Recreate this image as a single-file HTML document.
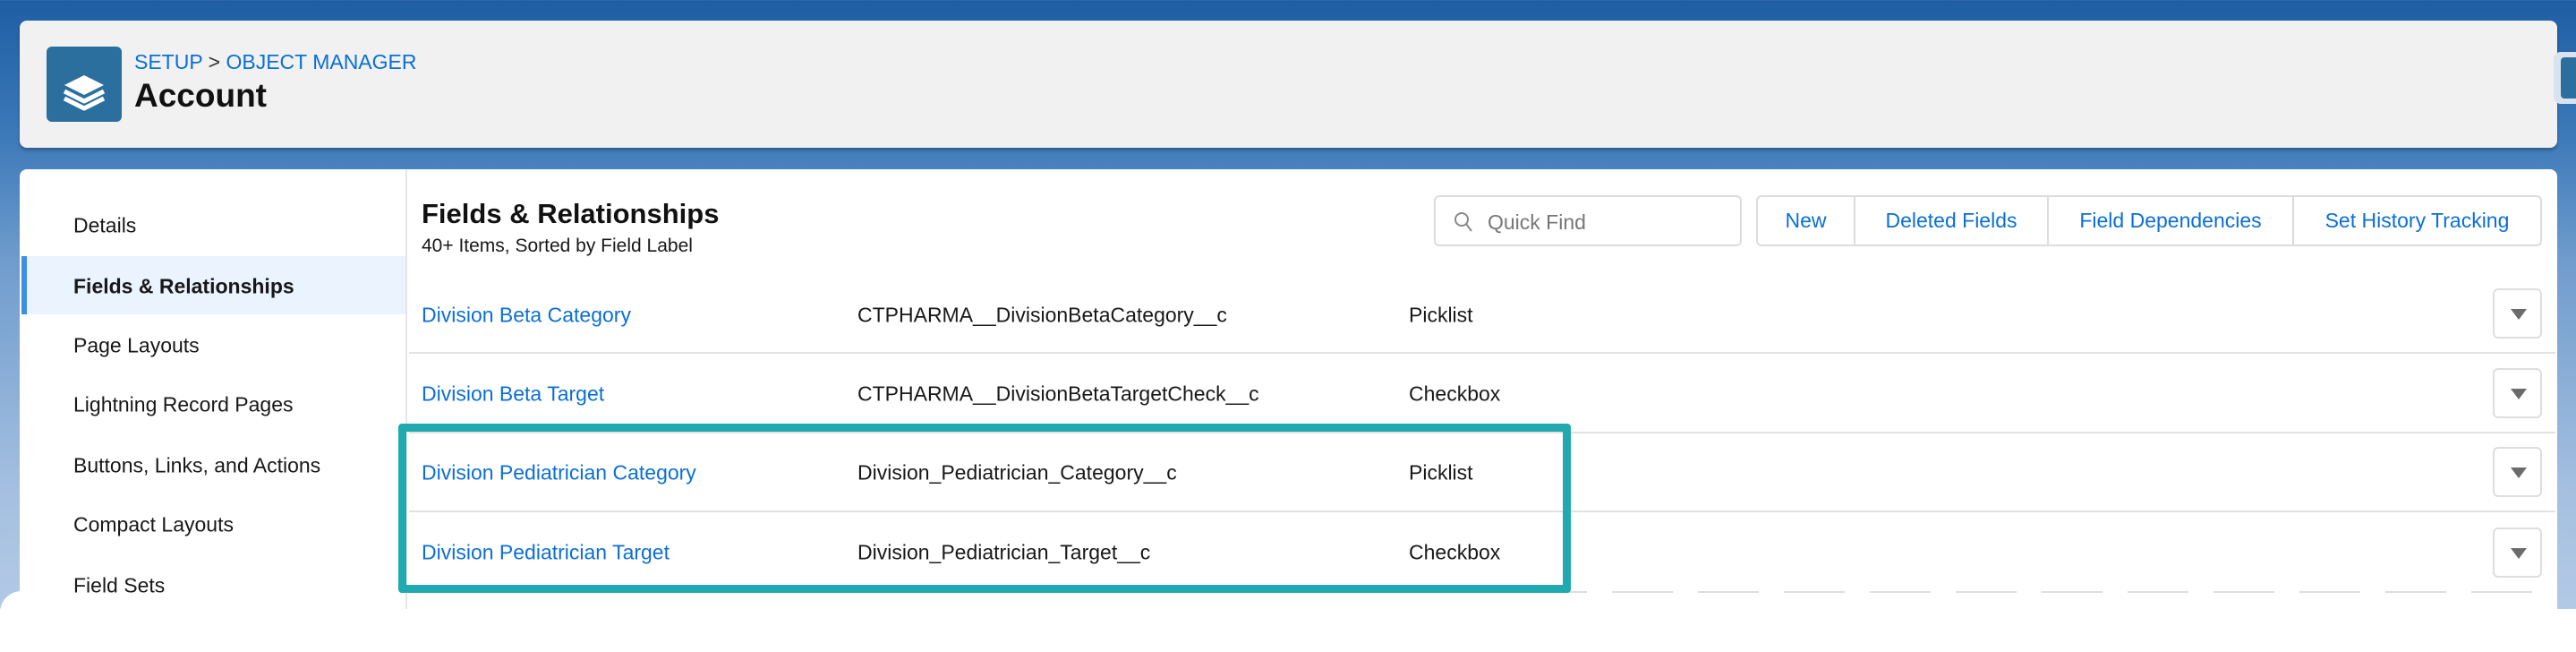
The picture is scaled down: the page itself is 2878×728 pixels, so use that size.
<!DOCTYPE html>
<html><head><meta charset="utf-8"><style>
*{margin:0;padding:0;box-sizing:border-box}
body{width:2878px;height:728px;overflow:hidden;position:relative;font-family:"Liberation Sans",sans-serif;background:linear-gradient(180deg,#1f5ea3 0%,#3a78b8 20%,#6f9ccd 40%,#a4bfe0 75%,#b8cde8 100%)}
.abs{position:absolute}
.hdr{left:22px;top:23px;width:2835px;height:142px;background:#f1f1f1;border-radius:8px;box-shadow:0 3px 3px rgba(0,0,0,.25)}
.icon{left:52px;top:52px;width:84px;height:84px;background:#2b6f9f;border-radius:6px}
.bc{left:150px;top:56px;font-size:23px;color:#0b6fd5}
.bc span{color:#333}
.title{left:150px;top:86px;font-size:37px;font-weight:bold;color:#111}
.card{left:22px;top:189px;width:2835px;height:500px;background:#fff;border-radius:8px}
.side{left:22px;top:189px;width:433px;height:491px;border-right:2px solid #e5e5e5}
.si{position:absolute;left:60px;font-size:23px;color:#181818;transform:translateY(-50%)}
.hl{left:24px;top:286px;width:431px;height:65px;background:#eaf3fe;border-left:6px solid #3d8ee8}
.t{position:absolute;font-size:23px;transform:translateY(-50%);white-space:nowrap}
.lk{color:#0b6fd5;left:471px}
.api{color:#181818;left:958px}
.ty{color:#181818;left:1574px}
.div{position:absolute;left:457px;width:2398px;height:2px;background:#e2e2e2}
.dd{position:absolute;left:2785px;width:55px;height:56px;border:2px solid #dedede;border-radius:6px;background:#fff}
.dd:after{content:"";position:absolute;left:18px;top:21px;border-left:9px solid transparent;border-right:9px solid transparent;border-top:12px solid #6b6b6b}
.qf{left:1602px;top:218px;width:344px;height:57px;border:2px solid #dcdcdc;border-radius:6px;font-size:23px;color:#777;padding:15px 0 0 58px}
.bg{left:1962px;top:218px;width:878px;height:57px;border:2px solid #dcdcdc;border-radius:6px;display:flex}
.bg div{height:100%;border-right:2px solid #dcdcdc;color:#0b6fd5;font-size:23px;display:flex;align-items:center;justify-content:center}
.bg div:last-child{border-right:none}
.teal{left:445px;top:473px;width:1310px;height:189px;border:9px solid #21a9b1;border-radius:4px}
.bottom{left:0;top:680px;width:2878px;height:48px;background:#fff}
</style></head><body>
<div class="abs hdr"></div>
<div class="abs" style="left:2853px;top:58px;width:25px;height:58px;background:#d8e3ef;border-radius:8px 0 0 8px"><div style="margin:6px 0 0 8px;width:20px;height:46px;background:#2b6f9f;border-radius:4px"></div></div>
<div class="abs icon"><svg width="84" height="84" viewBox="0 0 84 84"><path d="M42 32 L64 43 L42 54 L20 43 Z" fill="#fff"/><path d="M20 50 L42 61 L64 50" stroke="#fff" stroke-width="5" fill="none" stroke-linejoin="round"/><path d="M20 58 L42 69 L64 58" stroke="#fff" stroke-width="5" fill="none" stroke-linejoin="round"/></svg></div>
<div class="abs bc">SETUP <span>&gt;</span> OBJECT MANAGER</div>
<div class="abs title">Account</div>
<div class="abs card"></div>
<div class="abs hl"></div>
<div class="abs side"></div>
<div class="si" style="top:252px;left:82px">Details</div>
<div class="si" style="top:320px;left:82px;font-weight:bold">Fields &amp; Relationships</div>
<div class="si" style="top:386px;left:82px">Page Layouts</div>
<div class="si" style="top:452px;left:82px">Lightning Record Pages</div>
<div class="si" style="top:520px;left:82px">Buttons, Links, and Actions</div>
<div class="si" style="top:586px;left:82px">Compact Layouts</div>
<div class="si" style="top:654px;left:82px">Field Sets</div>
<div class="t" style="left:471px;top:239px;font-size:31px;font-weight:bold;color:#111">Fields &amp; Relationships</div>
<div class="t" style="left:471px;top:275px;font-size:21px;color:#181818">40+ Items, Sorted by Field Label</div>
<div class="abs qf"><svg class="abs" style="left:20px;top:16px" width="22" height="24" viewBox="0 0 22 24"><circle cx="9" cy="9" r="7" stroke="#888" stroke-width="2" fill="none"/><path d="M14 14 L20 22" stroke="#888" stroke-width="2"/></svg>Quick Find</div>
<div class="abs bg"><div style="width:109px">New</div><div style="width:216px">Deleted Fields</div><div style="width:274px">Field Dependencies</div><div style="flex:1">Set History Tracking</div></div>
<div class="t lk" style="top:352px">Division Beta Category</div><div class="t api" style="top:352px">CTPHARMA__DivisionBetaCategory__c</div><div class="t ty" style="top:352px">Picklist</div>
<div class="div" style="top:393px"></div>
<div class="t lk" style="top:440px">Division Beta Target</div><div class="t api" style="top:440px">CTPHARMA__DivisionBetaTargetCheck__c</div><div class="t ty" style="top:440px">Checkbox</div>
<div class="div" style="top:482px"></div>
<div class="t lk" style="top:528px">Division Pediatrician Category</div><div class="t api" style="top:528px">Division_Pediatrician_Category__c</div><div class="t ty" style="top:528px">Picklist</div>
<div class="div" style="top:570px"></div>
<div class="t lk" style="top:617px">Division Pediatrician Target</div><div class="t api" style="top:617px">Division_Pediatrician_Target__c</div><div class="t ty" style="top:617px">Checkbox</div>
<div class="abs" style="left:457px;top:660px;width:2398px;height:2px;background:repeating-linear-gradient(90deg,#ddd 0 68px,transparent 68px 96px)"></div>
<div class="dd" style="top:322px"></div><div class="dd" style="top:411px"></div><div class="dd" style="top:499px"></div><div class="dd" style="top:589px"></div>
<div class="abs teal"></div>
<div class="abs bottom"></div>
<div class="abs" style="left:0;top:660px;width:24px;height:24px;background:#fff;border-radius:24px 0 0 0"></div>
</body></html>
